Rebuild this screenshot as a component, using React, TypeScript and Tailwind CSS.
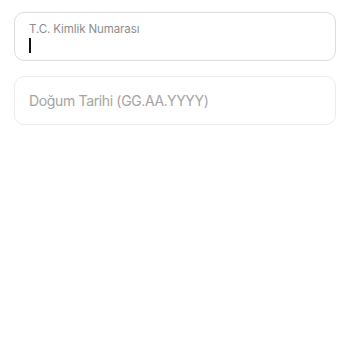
export default function App() {
  return (
    <div className="w-[350px] h-[350px] bg-white px-[14px] pt-[12px] flex flex-col gap-[15px]" style={{ fontFamily: 'Inter, "Noto Sans", sans-serif' }}>
      <div className="h-[49px] rounded-[10px] border border-[#dcdcdc] pl-[14px] pt-[9px] flex flex-col">
        <span className="text-[11.5px] leading-[14px] text-[#8c8c8c] tracking-[-0.1px]">T.C. Kimlik Numarası</span>
        <span className="mt-[2px] w-[2px] h-[15px] bg-[#111]" />
      </div>
      <div className="h-[49px] rounded-[10px] border border-[#ececec] pl-[14px] flex items-center">
        <span className="text-[14px] text-[#a3a3a3] tracking-[-0.35px]">Doğum Tarihi (GG.AA.YYYY)</span>
      </div>
    </div>
  )
}
